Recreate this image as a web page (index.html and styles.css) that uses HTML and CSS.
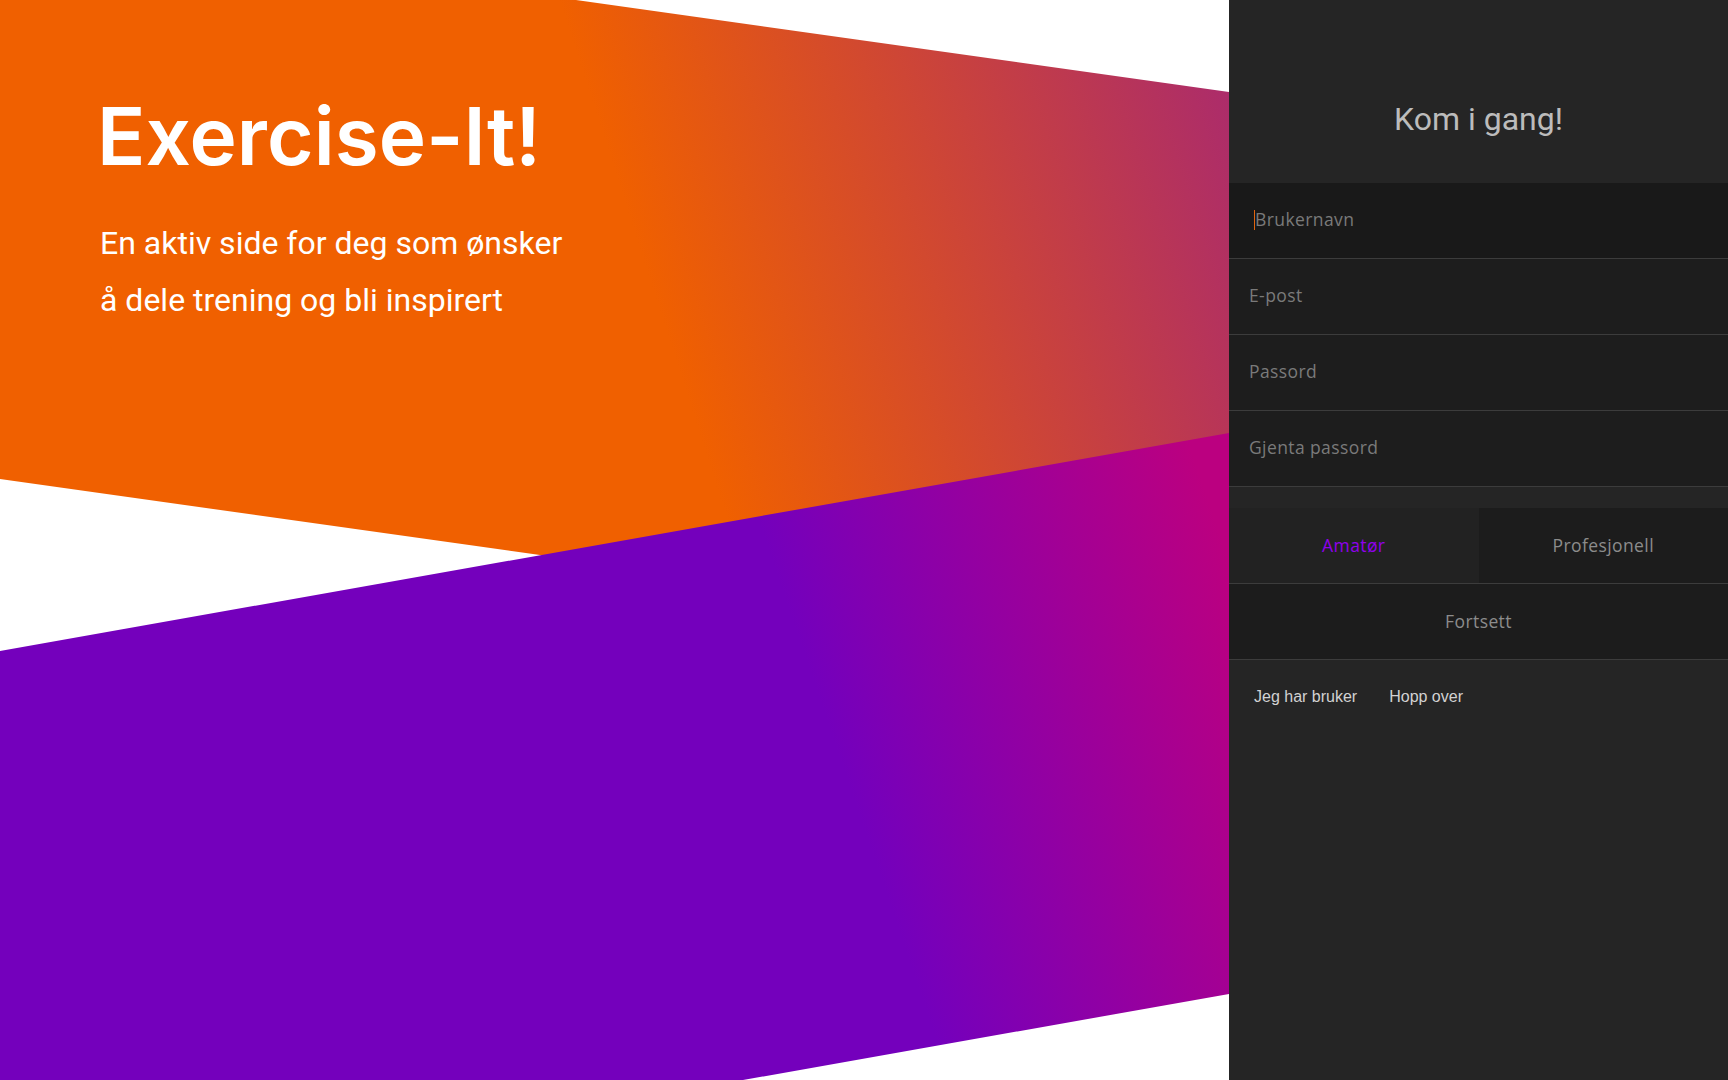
FILE: index.html
```html
<!DOCTYPE html>
<html lang="no">
<head>
<meta charset="utf-8">
<title>Exercise-It!</title>
<link rel="stylesheet" href="styles.css">
</head>
<body>
<main class="page">
  <section class="hero">
    <svg class="hero-bg" viewBox="0 0 1229 1080" preserveAspectRatio="none" aria-hidden="true">
      <defs>
        <linearGradient id="gOrange" gradientUnits="userSpaceOnUse" x1="640" y1="250" x2="1229" y2="60">
          <stop offset="0" stop-color="#f06000"/>
          <stop offset="1" stop-color="#ab2b6c"/>
        </linearGradient>
        <linearGradient id="gPurple" gradientUnits="userSpaceOnUse" x1="820" y1="700" x2="1229" y2="560">
          <stop offset="0" stop-color="#7400bc"/>
          <stop offset="1" stop-color="#bb0080"/>
        </linearGradient>
      </defs>
      <polygon points="0,0 576,0 1229,92 1229,652 0,479" fill="url(#gOrange)"/>
      <polygon points="0,651 1229,433 1229,994 743,1080 0,1080" fill="url(#gPurple)"/>
    </svg>
    <div class="hero-content">
      <h1 class="brand">Exercise-It!</h1>
      <p class="tagline">En aktiv side for deg som ønsker<br>å dele trening og bli inspirert</p>
    </div>
  </section>

  <aside class="panel">
    <header class="panel-head">
      <h2 class="panel-title">Kom i gang!</h2>
    </header>
    <form class="form">
      <div class="field field--focus"><input class="input" type="text" placeholder="Brukernavn"></div>
      <div class="field"><input class="input" type="email" placeholder="E-post"></div>
      <div class="field"><input class="input" type="password" placeholder="Passord"></div>
      <div class="field"><input class="input" type="password" placeholder="Gjenta passord"></div>
      <div class="toggle">
        <button type="button" class="toggle-btn toggle-btn--active">Amatør</button>
        <button type="button" class="toggle-btn">Profesjonell</button>
      </div>
      <button type="button" class="submit">Fortsett</button>
    </form>
    <nav class="links">
      <a class="link" href="#">Jeg har bruker</a>
      <a class="link" href="#">Hopp over</a>
    </nav>
  </aside>
</main>
</body>
</html>
```

FILE: styles.css
```css
* { box-sizing: border-box; }

html, body {
  margin: 0;
  padding: 0;
  height: 100%;
}

body {
  background: #ffffff;
  font-family: Roboto, "Liberation Sans", sans-serif;
}

.page {
  display: flex;
  width: 100%;
  height: 1080px;
  overflow: hidden;
}

.hero {
  position: relative;
  flex: 1 1 auto;
  background: #ffffff;
}

.hero-bg {
  position: absolute;
  inset: 0;
  width: 100%;
  height: 100%;
  display: block;
}

.hero-content {
  position: relative;
  padding: 86px 0 0 97px;
  color: #ffffff;
}

.brand {
  margin: 0;
  font-family: Inter, "Liberation Sans", sans-serif;
  font-weight: 600;
  font-size: 80px;
  line-height: 100px;
  letter-spacing: 0.1px;
}

.tagline {
  margin: 29px 0 0 3px;
  font-family: Roboto, "Liberation Sans", sans-serif;
  font-weight: 400;
  font-size: 32px;
  line-height: 57px;
}

.panel {
  flex: 0 0 499px;
  width: 499px;
  background: #252525;
  display: flex;
  flex-direction: column;
}

.panel-head {
  height: 183px;
  display: flex;
  align-items: center;
  justify-content: center;
  padding-top: 54px;
}

.panel-title {
  margin: 0;
  font-family: Roboto, "Liberation Sans", sans-serif;
  font-weight: 400;
  font-size: 32px;
  color: #bcbcbc;
}

.form {
  display: flex;
  flex-direction: column;
}

.field {
  position: relative;
  height: 76px;
  background: #1d1d1d;
  border-bottom: 1px solid #3c3c3c;
}

.field--focus {
  background: #191919;
}

.field--focus::before {
  content: "";
  position: absolute;
  left: 25px;
  top: 27px;
  width: 1px;
  height: 20px;
  background: #e0640f;
}

.input {
  width: 100%;
  height: 100%;
  border: 0;
  outline: 0;
  background: transparent;
  padding: 0 20px 3px;
  font-family: "Open Sans", sans-serif;
  font-size: 17.5px;
  letter-spacing: 0.4px;
  color: #cfcfcf;
}

.field--focus .input {
  padding-left: 26px;
}

.input::placeholder {
  color: #7a7a7a;
}

.toggle {
  display: flex;
  margin-top: 21px;
  height: 76px;
  border-bottom: 1px solid #3c3c3c;
}

.toggle-btn {
  flex: 1 1 50%;
  border: 0;
  background: #1c1c1c;
  font-family: "Open Sans", sans-serif;
  font-size: 17.5px;
  letter-spacing: 0.4px;
  color: #8c8c8c;
  cursor: pointer;
  padding: 0 0 2px;
}

.toggle-btn--active {
  background: #222222;
  color: #9000ec;
}

.submit {
  height: 76px;
  border: 0;
  border-bottom: 1px solid #3c3c3c;
  background: #1c1c1c;
  font-family: "Open Sans", sans-serif;
  font-size: 17.5px;
  letter-spacing: 0.4px;
  color: #8c8c8c;
  padding: 0 0 2px;
  cursor: pointer;
}

.links {
  display: flex;
  gap: 32px;
  padding: 28px 0 0 25px;
}

.link {
  font-family: "Liberation Sans", Arial, sans-serif;
  font-size: 16px;
  color: #d2d2d2;
  text-decoration: none;
}
```
